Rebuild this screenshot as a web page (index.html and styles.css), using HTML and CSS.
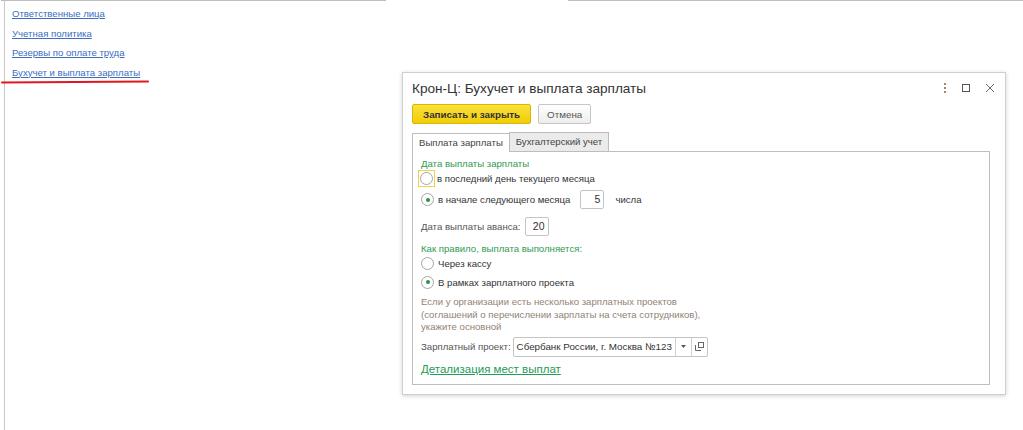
FILE: index.html
```html
<!DOCTYPE html>
<html lang="ru">

<head>
    <meta charset="UTF-8" />
    <meta name="viewport" content="width=device-width, initial-scale=1.0" />
    <title>Бухучет и выплата зарплаты</title>
    <link rel="stylesheet" href="styles.css">
</head>

<body>
    <div class="page">
        <div class="topline">
            <span class="seg seg-left"></span>
            <span class="seg seg-right"></span>
        </div>
        <div class="sidebar">
            <a href="#" class="navlink">Ответственные лица</a>
            <a href="#" class="navlink">Учетная политика</a>
            <a href="#" class="navlink">Резервы по оплате труда</a>
            <a href="#" class="navlink">Бухучет и выплата зарплаты</a>
        </div>
        <div class="redmark"></div>
    </div>

    <div class="dialog">
        <div class="dialog-head">
            <h1 class="dialog-title">Крон-Ц: Бухучет и выплата зарплаты</h1>
            <div class="win-icons">
                <svg width="4" height="12" viewBox="0 0 4 12">
                    <rect x="1" y="1" width="2" height="2" fill="#a08470" />
                    <rect x="1" y="5" width="2" height="2" fill="#a08470" />
                    <rect x="1" y="9" width="2" height="2" fill="#a08470" />
                </svg>
                <svg width="10" height="10" viewBox="0 0 10 10">
                    <rect x="1.5" y="1.5" width="7" height="7" fill="none" stroke="#555" stroke-width="1" />
                </svg>
                <svg width="10" height="10" viewBox="0 0 10 10">
                    <path d="M1 1 L9 9 M9 1 L1 9" stroke="#6a6a6a" stroke-width="1" />
                </svg>
            </div>
        </div>

        <div class="toolbar">
            <button class="btn btn-main">Записать и закрыть</button>
            <button class="btn">Отмена</button>
        </div>

        <div class="tabs">
            <div class="tab active">Выплата зарплаты</div>
            <div class="tab">Бухгалтерский учет</div>
        </div>

        <div class="panel">
            <div class="group-title">Дата выплаты зарплаты</div>
            <div class="row row-first">
                <span class="focus"><span class="radio"></span></span>
                <span class="label">в последний день текущего месяца</span>
            </div>
            <div class="row row-second">
                <span class="radio checked"></span>
                <span class="label">в начале следующего месяца</span>
                <span class="numbox numbox-day">5</span>
                <span class="label">числа</span>
            </div>
            <div class="row row-plain">
                <span class="caption">Дата выплаты аванса:</span>
                <span class="numbox">20</span>
            </div>
            <div class="group-title second">Как правило, выплата выполняется:</div>
            <div class="row row-cash">
                <span class="radio"></span>
                <span class="label">Через кассу</span>
            </div>
            <div class="row row-project">
                <span class="radio checked"></span>
                <span class="label">В рамках зарплатного проекта</span>
            </div>
            <p class="hint">Если у организации есть несколько зарплатных проектов<br>(соглашений о перечислении зарплаты на счета сотрудников),<br>укажите основной</p>
            <div class="row row-combo">
                <span class="caption">Зарплатный проект:</span>
                <div class="combo">
                    <span class="combo-text">Сбербанк России, г. Москва №123</span>
                    <span class="combo-btn">
                        <svg width="5" height="3" viewBox="0 0 5 3"><path d="M0 0 H5 L2.5 3 Z" fill="#555" /></svg>
                    </span>
                    <span class="combo-btn">
                        <svg width="9" height="9" viewBox="0 0 9 9">
                            <rect x="3.5" y="0.5" width="5" height="5" fill="none" stroke="#666" />
                            <path d="M0.5 3 V8.5 H6" fill="none" stroke="#666" />
                        </svg>
                    </span>
                </div>
            </div>
            <a href="#" class="detail-link">Детализация мест выплат</a>
        </div>
    </div>
</body>

</html>
```

FILE: styles.css
```css
html,
body {
    margin: 0;
    height: 100%;
    background: #fff;
    font-family: Arial, "Liberation Sans", sans-serif;
    font-size: 9.6px;
    color: #444;
}

.page {
    position: relative;
    height: 430px;
    border-left: 1px solid #c9c9c9;
    margin-left: 4px;
}

.topline {
    display: flex;
    margin-left: -4px;
}

.seg {
    height: 1px;
    background: #bdbdbd;
}

.seg-left {
    width: 385px;
}

.seg-right {
    margin-left: 182px;
    flex: 1;
}

.sidebar {
    display: flex;
    flex-direction: column;
    align-items: flex-start;
    gap: 7px;
    padding: 7px 0 0 7px;
}

.navlink {
    color: #3d6ec0;
    text-decoration: underline;
    font-size: 9.6px;
    line-height: 12.5px;
}

.redmark {
    position: absolute;
    left: -4px;
    top: 81px;
    width: 148px;
    height: 2px;
    background: #e2181e;
    border-radius: 1px;
    transform: rotate(-0.4deg);
}

.dialog {
    position: absolute;
    left: 402px;
    top: 72px;
    width: 604px;
    height: 323px;
    box-sizing: border-box;
    border: 1px solid #cfcfcf;
    box-shadow: 0 1px 4px rgba(0, 0, 0, 0.18);
    background: #fff;
    padding: 0 15px 0 9px;
}

.dialog-head {
    display: flex;
    align-items: center;
    justify-content: space-between;
    height: 30px;
}

.dialog-title {
    margin: 0;
    font-size: 13.6px;
    font-weight: normal;
    color: #333;
    padding-top: 1px;
}

.win-icons {
    display: flex;
    align-items: center;
    gap: 14px;
    margin-right: -5px;
}

.toolbar {
    display: flex;
    gap: 7px;
    margin-top: 1px;
}

.btn {
    height: 20px;
    padding: 0 8px;
    border: 1px solid #c6c6c6;
    border-radius: 2px;
    background: linear-gradient(#fff, #ededed);
    font-family: inherit;
    font-size: 9.8px;
    color: #555;
}

.btn-main {
    background: linear-gradient(#fbe13a, #f1cd08);
    border-color: #d8b60a;
    color: #333;
    font-weight: bold;
    padding: 0 10px;
}

.tabs {
    display: flex;
    margin-top: 8px;
}

.tab {
    height: 18px;
    line-height: 18px;
    padding: 0 6px;
    border: 1px solid #bdbdbd;
    border-bottom: none;
    background: #ebebeb;
    color: #444;
}

.tab.active {
    background: #fff;
    position: relative;
    top: 1px;
    border-right: none;
}

.panel {
    border: 1px solid #bdbdbd;
    height: 234px;
    box-sizing: border-box;
    padding: 5px 8px 0 8px;
}

.group-title {
    color: #2f9a52;
    line-height: 13px;
}

.group-title.second {
    margin-top: 5px;
}

.row {
    display: flex;
    align-items: center;
    height: 22px;
    gap: 4px;
}

.row-first {
    height: 17px;
    margin-left: -3px;
}

.row-second {
    height: 25px;
}

.row-plain {
    margin-top: 3px;
}

.row-cash {
    height: 17px;
}

.row-project {
    height: 20px;
}

.row-combo {
    margin-top: 2px;
}

.focus {
    display: flex;
    align-items: center;
    justify-content: center;
    width: 15px;
    height: 15px;
    border: 1px solid #f0d34a;
    margin-right: -2px;
}

.radio {
    width: 11px;
    height: 11px;
    border: 1px solid #a6a6a6;
    border-radius: 50%;
    background: #fff;
    display: flex;
    align-items: center;
    justify-content: center;
}

.radio.checked::after {
    content: "";
    width: 4px;
    height: 4px;
    border-radius: 50%;
    background: #2c8f4c;
}

.label {
    color: #333;
}

.caption {
    color: #555;
}

.numbox {
    width: 19px;
    height: 17px;
    line-height: 17px;
    border: 1px solid #c4c4c4;
    border-radius: 2px;
    text-align: right;
    padding-right: 3px;
    font-size: 10.5px;
    color: #333;
}

.numbox-day {
    margin: 0 7px 0 6px;
}

.hint {
    margin: 4px 0 0 0;
    color: #928373;
    line-height: 12.5px;
}

.combo {
    display: flex;
    height: 18px;
    border: 1px solid #c4c4c4;
    border-radius: 2px;
    margin-left: -2px;
}

.combo-text {
    width: 158px;
    padding-left: 3px;
    line-height: 18px;
    font-size: 9.8px;
    color: #333;
    white-space: nowrap;
    overflow: hidden;
}

.combo-btn {
    width: 15px;
    border-left: 1px solid #d2d2d2;
    display: flex;
    align-items: center;
    justify-content: center;
}

.detail-link {
    display: inline-block;
    margin-top: 5px;
    color: #269b56;
    font-size: 11.5px;
    text-decoration: underline;
}
```
